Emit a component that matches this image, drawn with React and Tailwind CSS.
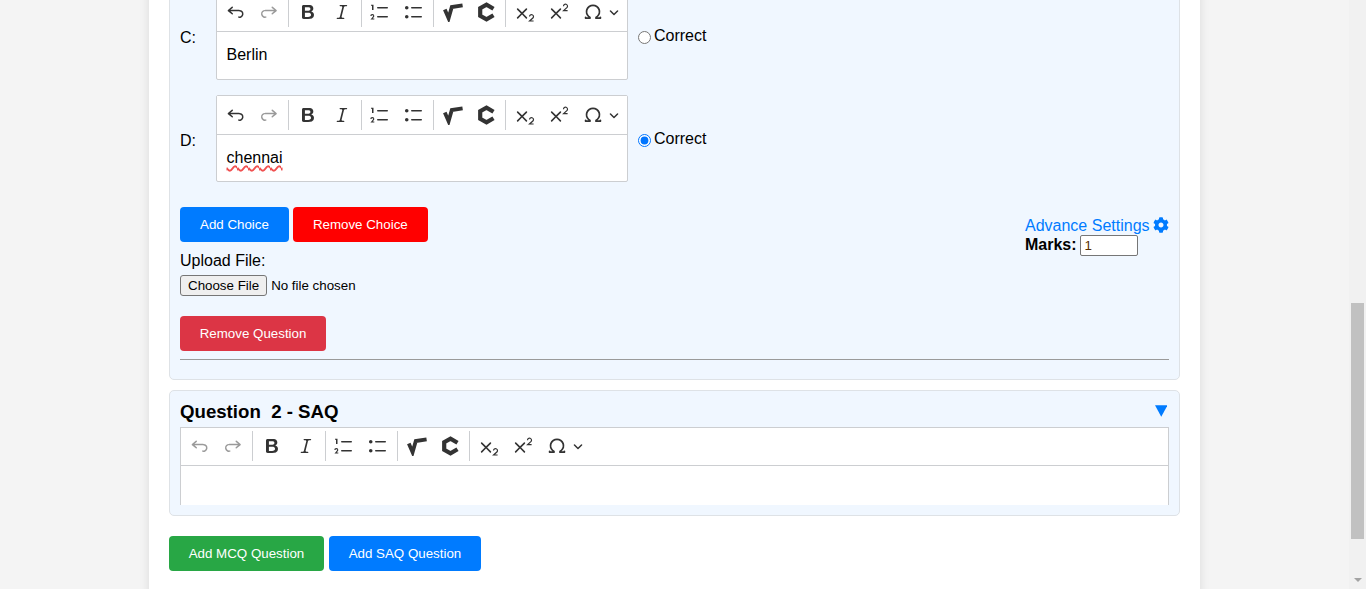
import { FaCog } from 'react-icons/fa';

const X = "m7.03 10.349 3.818-3.819a.8.8 0 1 1 1.132 1.132L8.16 11.48l3.819 3.818a.8.8 0 1 1-1.132 1.132L7.03 12.61l-3.818 3.82a.8.8 0 1 1-1.132-1.132L5.9 11.48 2.08 7.662A.8.8 0 1 1 3.212 6.53l3.818 3.82z";

const Icon = ({ children, dim }) => (
    <svg viewBox="0 0 20 20" className={`w-5 h-5 ${dim ? 'text-[#9a9a9a]' : 'text-[#333]'}`} fill="currentColor">
        {children}
    </svg>
);

const ToolBtn = ({ children }) => (
    <span className="w-[33.67px] h-[34px] flex items-center justify-center shrink-0">{children}</span>
);

const Sep = () => <span className="w-px h-[30px] bg-[#ccced1] mx-[2px] shrink-0" />;

// editor toolbar, same set of icons everywhere
const Toolbar = ({ undoDisabled }) => (
    <div className={`${undoDisabled ? 'h-[38px]' : 'h-[38.8px]'} flex items-center pl-[1.9px] border-b border-[#ccced1] bg-white`}>
        <ToolBtn>
            <Icon dim={undoDisabled}>
                <path d="m4.542 9.367 2.189 1.837a.75.75 0 0 1-.965 1.149l-3.788-3.18a.747.747 0 0 1-.21-.284.75.75 0 0 1 .17-.945L5.73 4.762a.75.75 0 1 1 .964 1.15L4.363 7.866h8.917A.75.75 0 0 1 13.5 7.9a4 4 0 1 1-1.477 7.718l.344-1.489a2.5 2.5 0 1 0 1.094-4.73l.008-.032H4.542z" />
            </Icon>
        </ToolBtn>
        <ToolBtn>
            <Icon dim>
                <path d="m14.958 9.367-2.189 1.837a.75.75 0 0 0 .965 1.149l3.788-3.18a.747.747 0 0 0 .21-.284.75.75 0 0 0-.17-.945L13.77 4.762a.75.75 0 1 0-.964 1.15l2.331 1.955H6.22A.75.75 0 0 0 6 7.9a4 4 0 1 0 1.477 7.718l-.344-1.489A2.5 2.5 0 1 1 5.039 9.39l-.008-.032h9.927z" />
            </Icon>
        </ToolBtn>
        <Sep />
        <ToolBtn>
            <Icon>
                <path fillRule="evenodd" d="M10.187 17H5.773c-.637 0-1.092-.138-1.364-.415-.273-.277-.409-.718-.409-1.323V4.738c0-.617.14-1.062.419-1.332.279-.27.73-.406 1.354-.406h4.68c.69 0 1.288.041 1.793.124.506.083.96.242 1.36.478.341.197.644.447.906.75a3.262 3.262 0 0 1 .808 2.162c0 1.401-.722 2.426-2.167 3.075C15.05 10.175 16 11.315 16 13.01a3.756 3.756 0 0 1-2.149 3.504c-.9.324-2.1.486-3.664.486zm-.222-6.313H6.917v4.24h3.147c1.979 0 2.969-.718 2.969-2.153 0-.734-.258-1.266-.775-1.597-.516-.33-1.28-.49-2.293-.49zM6.917 5.07v3.754h2.667c.724 0 1.284-.069 1.68-.205.396-.137.698-.397.907-.78.164-.272.245-.578.245-.917 0-.724-.258-1.204-.773-1.441-.516-.238-1.302-.356-2.358-.356H6.917z" />
            </Icon>
        </ToolBtn>
        <ToolBtn>
            <Icon>
                <path d="m9.586 14.633.021.004c-.036.335.095.655.393.962.082.083.173.15.274.201h1.474a.6.6 0 1 1 0 1.2H5.304a.6.6 0 0 1 0-1.2h1.15c.474-.07.809-.182 1.005-.334.157-.122.291-.32.404-.597l2.416-9.55a1.053 1.053 0 0 0-.281-.823 1.12 1.12 0 0 0-.442-.296H8.15a.6.6 0 0 1 0-1.2h6.443a.6.6 0 1 1 0 1.2h-1.195c-.376.056-.65.155-.823.296-.215.175-.423.439-.623.79l-2.366 9.347z" />
            </Icon>
        </ToolBtn>
        <Sep />
        <ToolBtn>
            <Icon>
                <path d="M7 5.75c0 .414.336.75.75.75h9.5a.75.75 0 1 0 0-1.5h-9.5a.75.75 0 0 0-.75.75zM3.5 3v5H2V3.7H1v-1h2.5V3zM.343 17.857l2.59-3.257a.8.8 0 1 0-1.4-.5H.302a2 2 0 1 1 3.995 0c-.048.405-.16.734-.333.988-.175.254-.59.692-1.244 1.312H4.3v1h-4l.043-.543zM7 14.75a.75.75 0 0 1 .75-.75h9.5a.75.75 0 1 1 0 1.5h-9.5a.75.75 0 0 1-.75-.75z" />
            </Icon>
        </ToolBtn>
        <ToolBtn>
            <Icon>
                <path d="M7 5.75c0 .414.336.75.75.75h9.5a.75.75 0 1 0 0-1.5h-9.5a.75.75 0 0 0-.75.75zm-6 0C1 4.784 1.777 4 2.75 4c.966 0 1.75.777 1.75 1.75 0 .966-.777 1.75-1.75 1.75C1.784 7.5 1 6.723 1 5.75zm6 9c0 .414.336.75.75.75h9.5a.75.75 0 1 0 0-1.5h-9.5a.75.75 0 0 0-.75.75zm-6 0c0-.966.777-1.75 1.75-1.75.966 0 1.75.777 1.75 1.75 0 .966-.777 1.75-1.75 1.75-.966 0-1.75-.777-1.75-1.75z" />
            </Icon>
        </ToolBtn>
        <Sep />
        <ToolBtn>
            <Icon>
                <path d="M1.8 7.5 L5.6 16.2 L8.8 5 L19.6 3.4" fill="none" stroke="currentColor" strokeWidth="3.8" />
            </Icon>
        </ToolBtn>
        <ToolBtn>
            <Icon>
                <path d="M17.5 6.8 L10.5 2.6 L4.2 6.2 V13.8 L10.5 17.4 L17.5 13.2" fill="none" stroke="currentColor" strokeWidth="4.2" />
            </Icon>
        </ToolBtn>
        <Sep />
        <ToolBtn>
            <Icon>
                <path d={X} />
                <path d="M14.5 14.6a2 2 0 1 1 3.6 1.2L14.6 19h4" fill="none" stroke="currentColor" strokeWidth="1.2" />
            </Icon>
        </ToolBtn>
        <ToolBtn>
            <Icon>
                <path d={X} />
                <path d="M14.5 4.2a2 2 0 1 1 3.6 1.2L14.6 8.6h4" fill="none" stroke="currentColor" strokeWidth="1.2" />
            </Icon>
        </ToolBtn>
        <span className="flex items-center ml-[8px] shrink-0">
            <Icon>
                <path d="M10 2.5a7.47 7.47 0 0 1 4.231 1.31 7.268 7.268 0 0 1 2.703 3.454 7.128 7.128 0 0 1 .199 4.353c-.39 1.436-1.475 2.72-2.633 3.677h2.013c0-.226.092-.443.254-.603a.876.876 0 0 1 1.229 0c.163.16.254.377.254.603v.853c0 .209-.078.41-.22.567a.873.873 0 0 1-.547.28l-.101.006h-4.695a.517.517 0 0 1-.516-.518v-1.265c0-.21.128-.398.317-.489a5.601 5.601 0 0 0 2.492-2.371 5.459 5.459 0 0 0 .552-3.693 5.53 5.53 0 0 0-1.955-3.2A5.71 5.71 0 0 0 10 4.206 5.708 5.708 0 0 0 6.419 5.46 5.527 5.527 0 0 0 4.46 8.663a5.457 5.457 0 0 0 .554 3.695 5.6 5.6 0 0 0 2.497 2.37c.189.092.317.28.317.49v1.264c0 .286-.232.518-.516.518H2.618a.877.877 0 0 1-.614-.25.845.845 0 0 1-.254-.603v-.853c0-.226.091-.443.254-.603a.876.876 0 0 1 1.228 0c.163.16.255.377.255.603h1.925c-1.158-.958-2.155-2.241-2.545-3.678a7.128 7.128 0 0 1 .199-4.352 7.268 7.268 0 0 1 2.703-3.455A7.475 7.475 0 0 1 10 2.5z" />
            </Icon>
            <svg viewBox="0 0 10 10" className="w-[10px] h-[10px] ml-[6px] text-[#333]" fill="currentColor">
                <path d="M.941 4.523a.75.75 0 1 1 1.06-1.06l3.006 3.005 3.005-3.005a.75.75 0 1 1 1.06 1.06l-3.549 3.55a.75.75 0 0 1-1.06 0L.941 4.523z" />
            </svg>
        </span>
    </div>
);

const Choice = ({ label, text, checked, wavy }) => (
    <div className="flex items-center">
        <span className="w-9 shrink-0 pt-1">{label}:</span>
        <div className="w-[412px] border border-[#ccced1] rounded-[2px] bg-white shrink-0">
            <Toolbar />
            <div className="h-[46.55px] flex items-center pl-[9.5px]">
                <span className={wavy ? 'underline decoration-wavy decoration-[#f05050] decoration-[1.5px] underline-offset-2' : ''}>{text}</span>
            </div>
        </div>
        <label className="ml-[10px]">
            <input type="radio" defaultChecked={checked} name={`c-${label}`} className="mr-[3px] align-[-3px]" />
            Correct
        </label>
    </div>
);

const Btn = ({ className, children }) => (
    <button className={`h-[35px] pt-px rounded text-white text-[13.333px] ${className}`}>{children}</button>
);

const App = () => {
    return (
        <div className="h-[589px] flex overflow-hidden bg-[#f4f4f4] text-black font-['Liberation_Sans',Arial,sans-serif] text-base">
            <main className="flex-1 overflow-hidden">
                <div className="w-[1051px] ml-[149px] h-[620px] bg-white px-5 -mt-[20px] shadow-[0_0_10px_rgba(0,0,0,0.1)]">
                    {/* Question 1, scrolled partly out of view */}
                    <div className="border border-[#dee2e6] rounded-[5px] bg-[#f0f7ff] px-[10px] pt-[11.4px] pb-[19px]">
                        <div className="flex flex-col gap-[15.15px]">
                            <Choice label="C" text="Berlin" />
                            <Choice label="D" text="chennai" checked wavy />
                        </div>

                        <div className="flex justify-between h-[35px] mt-[24.75px]">
                            <div className="flex gap-1">
                                <Btn className="px-5 bg-[#007bff]">Add Choice</Btn>
                                <Btn className="px-5 bg-[#ff0000]">Remove Choice</Btn>
                            </div>
                            <div className="w-[144px] pt-[9px]">
                                <div className="flex items-center text-[#007bff] leading-[19px] whitespace-nowrap">
                                    Advance Settings
                                    <FaCog className="w-4 h-4 ml-[3px]" />
                                </div>
                                <div className="flex items-center font-bold leading-[18px]">
                                    <span className="-mt-[1px]">Marks:</span>
                                    <input
                                        type="text"
                                        defaultValue="1"
                                        className="w-[58px] h-[21px] ml-[3px] px-[4px] border border-[#767676] rounded-[2px] bg-white text-[13.333px] font-normal text-[#5a2e00]"
                                    />
                                </div>
                            </div>
                        </div>

                        <div className="mt-[10px] leading-[18px]">Upload File:</div>
                        <input
                            type="file"
                            className="block mt-[5px] text-[13.333px] file:h-[21px] file:px-[7px] file:mr-1 file:border file:border-[#767676] file:rounded-[3px] file:bg-[#efefef] file:text-black"
                        />
                        <Btn className="px-[19.7px] bg-[#dc3545] mt-5 block">Remove Question</Btn>
                        <hr className="mt-2 border-t border-[#9a9a9a]" />
                    </div>

                    {/* Question 2 */}
                    <div className="mt-[10px] border border-[#dee2e6] rounded-[5px] bg-[#f0f7ff] px-[10px] pb-[10px] pt-[10px]">
                        <div className="flex items-center justify-between h-[26px] pb-[4px]">
                            <h3 className="text-[18.65px] font-bold whitespace-pre leading-[22px]">Question  2 - SAQ</h3>
                            <svg viewBox="0 0 13 12" className="w-[12.5px] h-3 mr-[2px] mb-px" fill="#007bff">
                                <path d="M0 0 H13 L6.5 12 Z" />
                            </svg>
                        </div>
                        <div className="h-[78px] overflow-hidden border-x border-t border-[#ccced1] bg-white">
                            <Toolbar undoDisabled />
                        </div>
                    </div>

                    <div className="flex gap-[5px] mt-5">
                        <Btn className="px-[19.7px] bg-[#28a745]">Add MCQ Question</Btn>
                        <Btn className="px-[19.7px] bg-[#007bff]">Add SAQ Question</Btn>
                    </div>
                </div>
            </main>

            {/* Scrollbar */}
            <div className="w-[17px] shrink-0 bg-[#f1f1f1] flex flex-col items-center">
                <div className="w-[13px] h-[236px] mt-[303px] bg-[#c1c1c1]" />
                <svg viewBox="0 0 8 4" className="w-2 h-1 mt-[39px]" fill="#a3a3a3">
                    <path d="M0 0 H8 L4 4 Z" />
                </svg>
            </div>
        </div>
    );
};

export default App;
